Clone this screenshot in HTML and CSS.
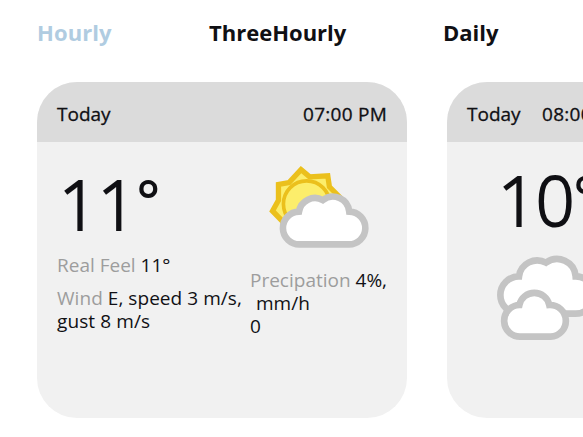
FILE: index.html
```html
<!DOCTYPE html>
<html lang="en">
<head>
<meta charset="utf-8">
<title>Forecast</title>
<link rel="stylesheet" href="styles.css">
</head>
<body>
<nav class="tabs">
  <a class="tab tab-hourly active">Hourly</a>
  <a class="tab tab-three">ThreeHourly</a>
  <a class="tab tab-daily">Daily</a>
</nav>
<main class="cards">
  <article class="card card-open">
    <header class="card-header"><span class="day">Today</span><span class="time">07:00 PM</span></header>
    <div class="card-body">
      <section class="left">
        <div class="temp">11<span class="degree">°</span></div>
        <p class="feel"><span class="label">Real Feel</span> 11°</p>
        <p class="wind"><span class="wind-line"><span class="label">Wind</span> E, speed 3 m/s,</span><br><span class="gust">gust 8 m/s</span></p>
      </section>
      <section class="right">
        <svg class="icon" viewBox="0 0 420 330">
          <g fill="#fcee6b" stroke="#ebc01c">
            <path stroke-width="16" d="M154 58 L180 80 L235 77 L240 110 L276 146 L256 175 L257 224 L224 229 L186 266 L160 245 L105 247 L99 215 L68 183 L86 151 L86 103 L118 97Z"/>
            <circle stroke-width="11" cx="171" cy="162" r="70"/>
          </g>
          <path class="cloud" d="M150 284A49.500 49.500 0 0 1 148 185A49 49 0 0 1 220 150A50 50 0 0 1 300 185A49.500 49.500 0 0 1 298 284Z"/>
        </svg>
        <p class="rain"><span class="rain-line"><span class="label">Precipation</span> 4%,</span><br><span class="unit">mm/h</span><br>0</p>
      </section>
    </div>
  </article>
  <article class="card card-small">
    <header class="card-header"><span class="day">Today</span><span class="time">08:00 PM</span></header>
    <div class="small-body">
      <div class="temp">10<span class="degree">°</span></div>
      <svg class="icon-small" viewBox="45 280 320 270">
        <path class="cloud" d="M117 462A56 56 0 0 1 117 350A55 55 0 0 1 198 309A56 56 0 0 1 287 350A56 56 0 0 1 287 462Z"/>
        <path class="cloud" d="M122 531A47.500 47.500 0 0 1 118 436A46 46 0 0 1 208 436A47.500 47.500 0 0 1 212 531Z"/>
      </svg>
    </div>
  </article>
</main>
</body>
</html>
```
FILE: styles.css
```css
* { box-sizing: border-box; }
body {
  margin: 0;
  width: 583px;
  height: 437px;
  overflow: hidden;
  background: #fff;
  color: #101014;
  font-family: "Open Sans", "Noto Sans", sans-serif;
  font-size: 19px;
  line-height: 23px;
}
p { margin: 0; }
.tabs {
  display: flex;
  padding: 17px 0 0 37px;
  height: 82px;
  font-size: 22px;
  font-weight: 700;
  line-height: 30px;
}
.tab { flex: none; white-space: nowrap; }
.tab-hourly { width: 172px; letter-spacing: 0.1px; }
.tab-three { width: 234px; }
.active { color: #b0cce1; }
.cards { display: flex; gap: 40px; padding-left: 37px; }
.card {
  flex: none;
  height: 336px;
  border-radius: 40px;
  overflow: hidden;
  background: #f1f1f1;
}
.card-open { width: 370px; }
.card-small { width: 199px; }
.card-header {
  display: flex;
  justify-content: space-between;
  align-items: center;
  height: 60px;
  padding: 4px 20px 0;
  background: #dbdbdb;
  -webkit-text-stroke: 0.3px #101014;
  white-space: nowrap;
}
.time { letter-spacing: 0.25px; }
.card-body { display: flex; padding-left: 20px; }
.left { width: 193px; padding-top: 26px; white-space: nowrap; }
.temp {
  display: flex;
  height: 72px;
  padding-left: 2px;
  font-size: 68px;
  font-weight: 300;
  line-height: 72px;
  -webkit-text-stroke: 2px #101014;
  white-space: nowrap;
}
.degree { font-size: 54px; line-height: 62px; }
.feel { margin-top: 14px; }
.wind { margin-top: 10px; }
.wind-line { letter-spacing: 0.05px; }
.gust { letter-spacing: 0.1px; }
.label { color: #9d9d9d; }
.right { width: 137px; padding-top: 8px; white-space: nowrap; }
.icon { display: block; width: 139px; height: 110px; }
.rain { margin-top: 9px; }
.unit { padding-left: 6px; }
.cloud { fill: #fff; stroke: #c4c4c4; stroke-width: 20; }
.small-body { padding: 22px 0 0 48px; }
.small-body .temp { padding-left: 3px; letter-spacing: -1px; }
.icon-small { display: block; width: 106.667px; height: 90px; margin-top: 17px; }
```
